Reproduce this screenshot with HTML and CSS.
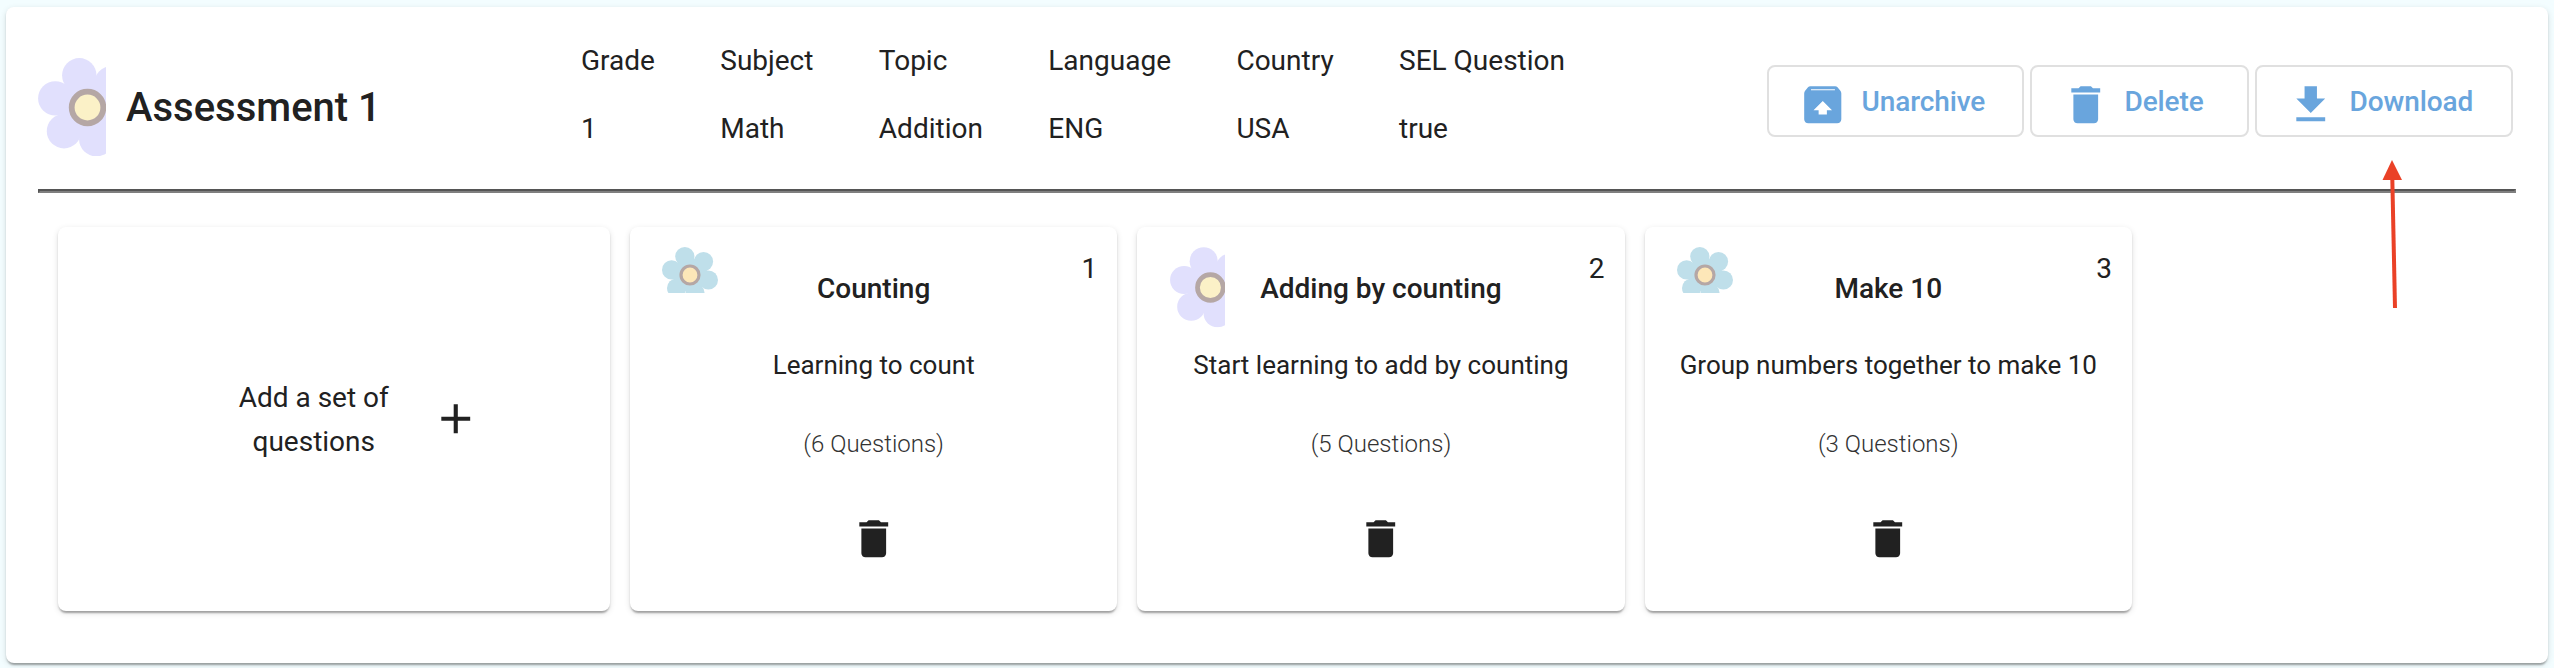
FILE: index.html
```html
<!DOCTYPE html>
<html lang="en">
<head>
<meta charset="utf-8">
<title>Assessment 1</title>
<link rel="stylesheet" href="styles.css">
</head>
<body>
<svg class="sprite" aria-hidden="true">
  <symbol id="lilac" viewBox="0 0 68 98.5">
    <g fill="#e1e0fd">
      <circle cx="41.3" cy="17.3" r="17.2"/><circle cx="17.3" cy="40.4" r="17.2"/><circle cx="26" cy="73.2" r="17.2"/>
      <circle cx="58.3" cy="81.2" r="17.2"/><circle cx="73.5" cy="25.3" r="17.2"/>
      <circle cx="49.5" cy="49.5" r="28"/>
    </g>
    <circle cx="49.5" cy="49.5" r="15.8" fill="#fbf1c7" stroke="#b5a7a5" stroke-width="5.8"/>
  </symbol>
  <symbol id="blue" viewBox="0 0 56 46">
    <g fill="#bfdfea">
      <circle cx="22.8" cy="9.6" r="9.6"/><circle cx="9.6" cy="22.9" r="9.6"/><circle cx="14.6" cy="41" r="9.6"/>
      <circle cx="33" cy="46" r="9.6"/><circle cx="46.4" cy="33" r="9.6"/><circle cx="41.5" cy="14.6" r="9.6"/>
      <circle cx="28" cy="28" r="16.5"/>
    </g>
    <circle cx="28" cy="28" r="9" fill="#fde7b8" stroke="#b5a7a5" stroke-width="3.2"/>
  </symbol>
  <symbol id="trash" viewBox="0 0 24 24"><path d="M6 19c0 1.1.9 2 2 2h8c1.1 0 2-.9 2-2V7H6v12zM19 4h-3.5l-1-1h-5l-1 1H5v2h14V4z"/></symbol>
  <symbol id="unarchive" viewBox="0 0 24 24"><path d="M20.55 5.22l-1.39-1.68C18.88 3.21 18.47 3 18 3H6c-.47 0-.88.21-1.15.55L3.46 5.22C3.17 5.57 3 6.01 3 6.5V19c0 1.1.89 2 2 2h14c1.1 0 2-.9 2-2V6.5c0-.49-.17-.93-.45-1.28zM12 10.200l4.500 4.500H14v2h-4v-2H7.500L12 10.200zM6.300 5v-.5h11.600v.5H6.300z"/></symbol>
  <symbol id="download" viewBox="0 0 24 24"><path d="M19 9h-4V3H9v6H5l7 7 7-7zM5 18v2h14v-2H5z"/></symbol>
  <symbol id="plus" viewBox="0 0 24 24"><path d="M19 13h-6v6h-2v-6H5v-2h6V5h2v6h6v2z"/></symbol>
</svg>

<main class="panel">
  <header class="head">
    <svg class="head-flower"><use href="#lilac"/></svg>
    <h1 class="title">Assessment 1</h1>
    <dl class="facts">
      <div><dt>Grade</dt><dd>1</dd></div>
      <div><dt>Subject</dt><dd>Math</dd></div>
      <div><dt>Topic</dt><dd>Addition</dd></div>
      <div><dt>Language</dt><dd>ENG</dd></div>
      <div><dt>Country</dt><dd>USA</dd></div>
      <div><dt>SEL Question</dt><dd>true</dd></div>
    </dl>
    <div class="actions">
      <button class="btn btn-unarchive"><svg class="icon"><use href="#unarchive"/></svg><span>Unarchive</span></button>
      <button class="btn btn-delete"><svg class="icon"><use href="#trash"/></svg><span>Delete</span></button>
      <button class="btn btn-download"><svg class="icon"><use href="#download"/></svg><span>Download</span></button>
    </div>
  </header>
  <hr class="rule">
  <section class="cards">
    <div class="card add">
      <p class="add-text">Add a set of questions</p>
      <svg class="icon"><use href="#plus"/></svg>
    </div>
    <article class="card">
      <svg class="flower-blue"><use href="#blue"/></svg><span class="num">1</span>
      <h2 class="name">Counting</h2>
      <p class="desc">Learning to count</p>
      <p class="count">(6 Questions)</p>
      <svg class="icon"><use href="#trash"/></svg>
    </article>
    <article class="card">
      <svg class="flower-lilac"><use href="#lilac"/></svg><span class="num">2</span>
      <h2 class="name">Adding by counting</h2>
      <p class="desc">Start learning to add by counting</p>
      <p class="count">(5 Questions)</p>
      <svg class="icon"><use href="#trash"/></svg>
    </article>
    <article class="card">
      <svg class="flower-blue"><use href="#blue"/></svg><span class="num">3</span>
      <h2 class="name">Make 10</h2>
      <p class="desc">Group numbers together to make 10</p>
      <p class="count">(3 Questions)</p>
      <svg class="icon"><use href="#trash"/></svg>
    </article>
  </section>
</main>

<svg class="pointer" viewBox="0 0 24 150" aria-hidden="true">
  <path d="M12.300 18L15 148" stroke="#ea4127" stroke-width="4"/>
  <path d="M12 0L22 20H2.500z" fill="#ea4127"/>
</svg>
</body>
</html>
```

FILE: styles.css
```css
* { box-sizing: border-box; }

body {
  margin: 0;
  height: 668px;
  padding: 7px 6px 5px;
  overflow: hidden;
  background: #f3fdff;
  color: #212121;
  font-family: Roboto, "Liberation Sans", sans-serif;
  font-size: 28px;
}

h1, h2, p, dl, dd { margin: 0; }

.sprite { position: absolute; width: 0; height: 0; }

.panel, .card {
  background: #fff;
  border-radius: 8px;
  box-shadow: 0 4px 2px -2px rgba(0,0,0,.2), 0 2px 2px 0 rgba(0,0,0,.14), 0 2px 6px 0 rgba(0,0,0,.12);
}

.panel { width: 2542px; height: 656px; padding: 0 32px; }

.head { display: flex; height: 182px; }

.head-flower { width: 68px; height: 98.5px; margin-top: 50.5px; flex: none; }

.title {
  width: 455px;
  margin: 78px 0 0 20px;
  flex: none;
  font-size: 40px;
  font-weight: 500;
  line-height: 46px;
}

.facts { display: flex; gap: 65.4px; padding-top: 38px; line-height: 32px; }
.facts dd { margin-top: 36px; }

.actions { display: flex; gap: 6px; margin: 58px 3px 0 auto; }

.btn {
  display: flex;
  height: 72px;
  padding: 13px 0 0;
  border: 2px solid #e0e0e0;
  border-radius: 8px;
  background: none;
  color: #69a5dd;
  font: 500 28px/33px Roboto, sans-serif;
  letter-spacing: -.1px;
}
.btn span { margin-top: 5px; }
.btn-unarchive { width: 257px; padding-left: 29px; }
.btn-delete { width: 219px; padding-left: 29px; }
.btn-download { width: 258px; padding-left: 29px; }
.btn .icon { margin-right: 14px; }

.icon { width: 49.5px; height: 49.5px; fill: currentColor; flex: none; }

.rule {
  height: 4px;
  margin: 0;
  border: 2px solid;
  border-color: #555 #7f7f7f #7f7f7f #555;
}

.cards {
  display: grid;
  grid-template-columns: 552px repeat(3, 487.3px);
  gap: 20px;
  padding: 34px 20px 0;
}

.card {
  position: relative;
  display: flex;
  flex-direction: column;
  align-items: center;
  height: 384px;
}

.add { flex-direction: row; padding: 0 130px 0 176px; }
.add-text { width: 160px; padding-top: 1px; line-height: 44px; text-align: center; }
.add .icon { margin-left: 37px; }

.flower-blue { position: absolute; left: 32px; top: 20px; width: 56px; height: 46px; }
.flower-lilac { position: absolute; left: 32.500px; top: 20px; width: 55.500px; height: 80.500px; }
.num { position: absolute; right: 20px; top: 26px; line-height: 32px; }

.name { margin-top: 46px; font-size: 28px; font-weight: 500; line-height: 32px; }
.desc { margin-top: 45px; font-size: 26px; line-height: 30px; }
.count { margin-top: 50px; font-size: 24px; font-weight: 300; line-height: 28px; color: #333; }
.card:not(.add) .icon { margin-top: 56px; }

.pointer { position: absolute; left: 2380px; top: 160px; width: 24px; height: 150px; }
```
